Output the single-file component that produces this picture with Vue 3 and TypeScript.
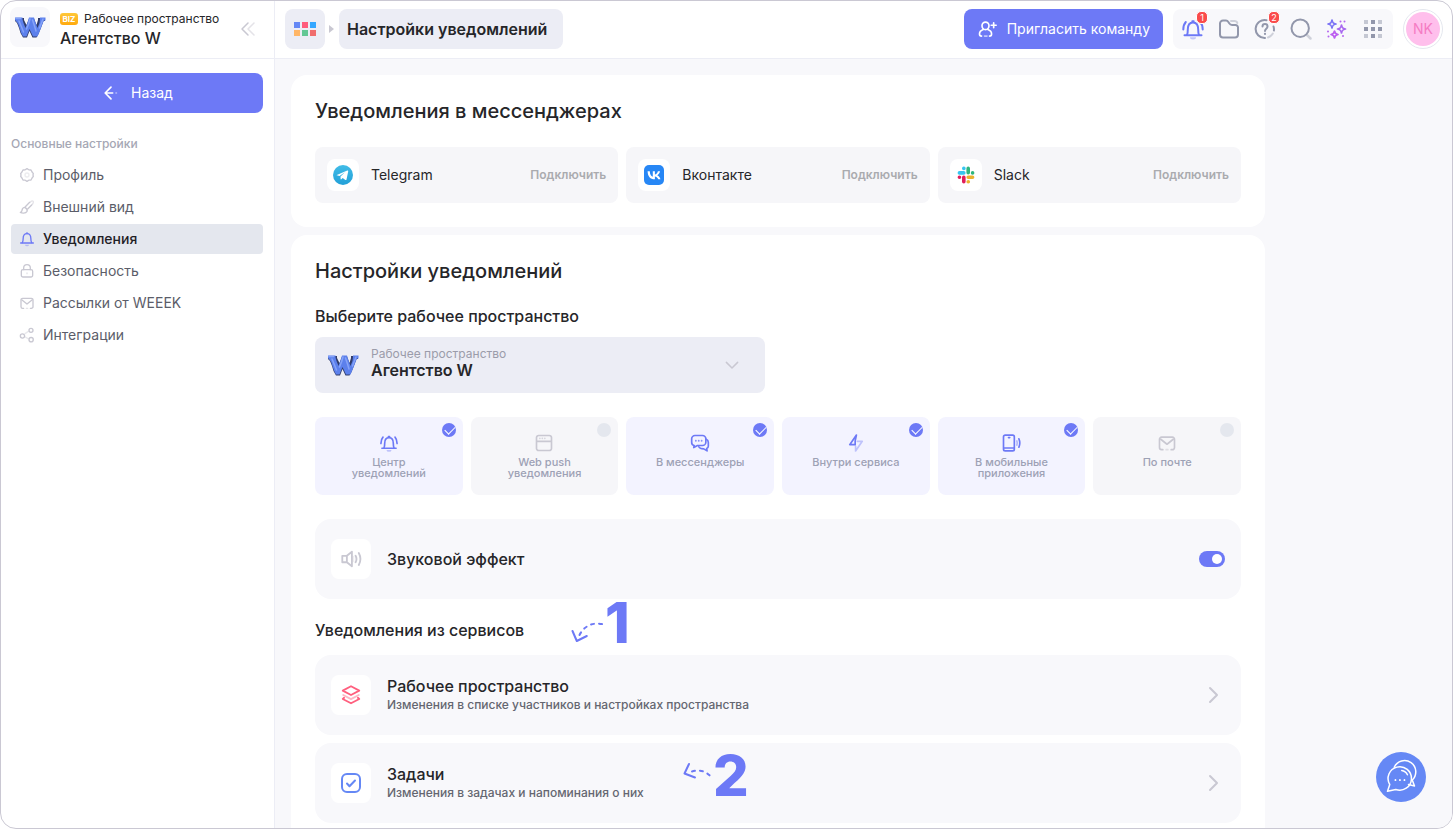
<script setup lang="ts">
import { h, ref, type FunctionalComponent } from 'vue'

interface Part {
  d: string
  color?: string
  opacity?: number
  fill?: boolean
  width?: number
}

const bellBody: Part[] = [
  { d: 'M6 18c.7-1.4.8-3 .8-5.500C6.800 8.500 8.500 5.500 12 5.500s5.200 3 5.200 7c0 2.500.1 4.100.8 5.500' },
  { d: 'M3.500 18.300h17' },
  { d: 'M11.300 4.300h1.400' },
  { d: 'M9 20.300h6a3 2.200 0 0 1-6 0z', opacity: 0.4, fill: true },
]
const bellWaves: Part = { d: 'M4.800 5C3 7 2.300 9.500 2.300 12.500M19.200 5c1.800 2 2.500 4.500 2.500 7.500' }

const icons: Record<string, Part[]> = {
  bell: [...bellBody, bellWaves],
  bellSmall: [
    { d: 'M5 17.500c1-1.700 1.200-3.500 1.200-6C6.200 7 8.200 4 12 4s5.800 3 5.800 7.500c0 2.500.2 4.300 1.200 6' },
    { d: 'M2.500 18h19M12 2.500V4' },
    { d: 'M9 20.500h6a3 2.500 0 0 1-6 0z', opacity: 0.4, fill: true },
  ],
  mail: [
    { d: 'M7 20H5.500A2.500 2.500 0 0 1 3 17.500v-10A2.500 2.500 0 0 1 5.500 5h13A2.500 2.500 0 0 1 21 7.500v10a2.500 2.500 0 0 1-2.500 2.500H17' },
    { d: 'm4.500 7.500 7.500 6 7.500-6' },
    { d: 'M11 20h2', opacity: 0.5 },
  ],
  back: [{ d: 'm12 5-7 7 7 7M5.500 12H14' }, { d: 'M18 12h.5', opacity: 0.5 }],
  collapse: [{ d: 'm12 4-8 8 8 8' }, { d: 'm20 4-8 8 8 8', opacity: 0.5 }],
  gear: [
    { d: 'M9.300 4.200 12 2.500l2.700 1.700 3.300.3 1.600 3 1.900 2.500-.5 2 .5 2-1.900 2.500-1.600 3-3.300.3L12 21.500l-2.700-1.700-3.300-.3-1.600-3L2.500 14l.5-2-.5-2 1.900-2.500 1.600-3z' },
    { d: 'M9 12a3 3 0 0 1 6 0 3 3 0 0 1-6 0', opacity: 0.35 },
  ],
  brush: [
    { d: 'M9 12.500c-3 0-4.200 2-4.500 4.500-.2 1.800-1 2.500-2.500 3 2 1.200 8 2.200 10-1.500 1-2-.2-4-3-6z' },
    { d: 'M9.500 11.500 16 5M13 15l6-6' },
    { d: 'm17 4.500 2-1.500c1.500-.8 3.200.8 2.400 2.400L20 8', opacity: 0.5 },
  ],
  lock: [
    { d: 'M6 10h12a2.500 2.500 0 0 1 2.500 2.500v6A2.500 2.500 0 0 1 18 21H6a2.500 2.500 0 0 1-2.500-2.500v-6A2.500 2.500 0 0 1 6 10z' },
    { d: 'M7 10V7.500a5 5 0 0 1 10 0V10' },
    { d: 'M12 15v1', opacity: 0.5 },
  ],
  share: [
    { d: 'M2 13.500a3.200 3.200 0 1 0 6.400 0 3.200 3.200 0 1 0-6.400 0M15 5a3 3 0 1 0 6 0 3 3 0 1 0-6 0M15 19a3.200 3.200 0 1 0 6.400 0 3.200 3.200 0 1 0-6.400 0' },
    { d: 'm9 10 5-3.500M9.500 15l4 2.500', opacity: 0.4 },
  ],
  invite: [
    { d: 'M6 8a4.200 4.200 0 1 1 8.400 0c0 2.500-1.800 4.700-4.200 4.700S6 10.500 6 8z' },
    { d: 'M7.500 12.500C4.500 13.500 3 15.500 3 18c0 1.500.8 2.500 2.500 2.500M13 12.500c3 1 4.500 3 4.500 5.500 0 1.500-.8 2.500-2.500 2.500' },
    { d: 'M9 20.500h3', opacity: 0.6 },
    { d: 'M20 4.500v6M17 7.500h6' },
  ],
  folder: [
    { d: 'M3 7v10.500A3 3 0 0 0 6 20.500h12a3 3 0 0 0 3-3v-7a2.500 2.500 0 0 0-2.500-2.500H15c-1.500 0-2.200-.7-3-2l-.8-1.200c-.5-.8-1.200-1.300-2.200-1.300H6a3 3 0 0 0-3 3z' },
    { d: 'M14 4h3.500c1.500 0 2.500.8 2.800 2', opacity: 0.4 },
  ],
  help: [
    { d: 'M13.500 3.200A9 9 0 1 0 12 21M20.500 9.500c.5 1.400.6 2.600.4 4' },
    { d: 'M19.800 16.500A9 9 0 0 1 15 20.500', opacity: 0.4 },
    { d: 'M9.500 9.500c0-3.200 5-3.200 5 0 0 2.200-2.500 2.200-2.500 4.500' },
    { d: 'M12 16.800v.2', width: 2.200 },
  ],
  search: [
    { d: 'M2.500 11.200a8.700 8.700 0 1 0 17.400 0 8.700 8.700 0 1 0-17.400 0' },
    { d: 'm18.500 18.500 3 3', opacity: 0.4, width: 2.500 },
  ],
  sparkles: [
    { d: 'M7 3c.5 2.800 1.200 3.500 4 4-2.800.5-3.500 1.200-4 4-.5-2.800-1.200-3.500-4-4 2.800-.5 3.500-1.200 4-4z', color: '#7c74f5', width: 1.700 },
    { d: 'M16.500 8c.5 2.800 1.200 3.500 4 4-2.800.5-3.500 1.200-4 4-.5-2.800-1.200-3.500-4-4 2.800-.5 3.500-1.200 4-4z', color: '#a868f0', width: 1.700 },
    { d: 'M9.500 14c.4 2.400 1.100 3.100 3.500 3.500-2.400.4-3.100 1.100-3.500 3.500-.4-2.400-1.100-3.100-3.500-3.500 2.400-.4 3.100-1.100 3.500-3.500z', color: '#bd60f0', width: 1.700 },
    { d: 'M15.500 4.500v.1M19.500 4.500v.1M3 14.500v.1M3.500 19.500v.1M18 19v.1', color: '#b566f0', width: 2 },
  ],
  grid: [
    { d: 'M10 3h4v4h-4zM3 10h4v4H3zM10 10h4v4h-4zM17 10h4v4h-4zM10 17h4v4h-4z', fill: true },
    { d: 'M3 3h4v4H3zM17 3h4v4h-4zM3 17h4v4H3zM17 17h4v4h-4z', fill: true, opacity: 0.5 },
  ],
  web: [
    { d: 'M5.500 3h13A2.500 2.500 0 0 1 21 5.500v13a2.500 2.500 0 0 1-2.500 2.500h-13A2.500 2.500 0 0 1 3 18.500v-13A2.500 2.500 0 0 1 5.500 3zM3 10h18' },
    { d: 'M7 6.500v.1M10 6.500v.1M13 6.500v.1', opacity: 0.7 },
  ],
  chats: [
    { d: 'M6 3h9a4 4 0 0 1 4 4v4a4 4 0 0 1-4 4H9l-4.500 2.500L5 15a4 4 0 0 1-3-4V7a4 4 0 0 1 4-4z' },
    { d: 'M19.500 7.500c1.700.7 2.500 2 2.500 4v4c0 1.500-.7 2.500-2 3l.5 3-4-2.500c-3 0-5-.5-6-2.500' },
    { d: 'M7 9.200v.1M10.500 9.200v.1M14 9.200v.1', width: 2.200, opacity: 0.8 },
  ],
  bolt: [
    { d: 'M12.500 2.500 4.500 14H11V9.500z' },
    { d: 'M13.500 10h6L11.500 21.500V16', opacity: 0.4 },
  ],
  phone: [
    { d: 'M5 2.500h9a2 2 0 0 1 2 2v15a2 2 0 0 1-2 2H5a2 2 0 0 1-2-2v-15a2 2 0 0 1 2-2zM3 18h13M9 5.500h1.500' },
    { d: 'M19 9.500c.7 1.700.7 3.300 0 5', opacity: 0.5 },
    { d: 'M21.500 7c1.400 3.300 1.400 6.700 0 10' },
  ],
  sound: [
    { d: 'M7.500 8.500 13 4v16l-5.500-4.500M7.500 8.500h-5v7h5z' },
    { d: 'M14.500 9.500v5', opacity: 0.3 },
    { d: 'M17 8.500c1.300 2.300 1.300 4.700 0 7M20.500 5.500c2.200 4 2.200 9 0 13' },
  ],
  layers: [
    { d: 'm12 2.500 9 4.700-9 4.800-9-4.800z' },
    { d: 'M3.500 12 12 16.500 20.500 12', opacity: 0.45 },
    { d: 'm4.500 15-1.500 1.300 9 4.700 9-4.700-1.500-1.300' },
  ],
  task: [
    { d: 'M8 3h8a5 5 0 0 1 5 5v8a5 5 0 0 1-5 5H8a5 5 0 0 1-5-5V8a5 5 0 0 1 5-5z' },
    { d: 'm8 12.500 2.500 2.700L16 9.500' },
  ],
  right: [{ d: 'm9 5 7 7-7 7' }],
  down: [{ d: 'm4.500 8.500 7.500 7.500 7.500-7.500' }],
  talk: [
    { d: 'M3 21.500 4.500 17A7.800 7.800 0 1 1 8.500 20.300z' },
    { d: 'M7.500 5.500A7.500 7.500 0 1 1 19.500 14l1.500 4-4-1' },
    { d: 'M12.500 7.700c1.700.2 3 1.200 3.800 2.800' },
    { d: 'M8.300 14v.1M11.300 14v.1M14.300 14v.1', width: 1.200 },
  ],
}

const Icon: FunctionalComponent<{ name: string; size?: number; weight?: number }> = (props) =>
  h(
    'svg',
    {
      class: 'icon',
      width: props.size ?? 24,
      height: props.size ?? 24,
      viewBox: '0 0 24 24',
      fill: 'none',
      'stroke-linecap': 'round',
      'stroke-linejoin': 'round',
      'aria-hidden': 'true',
    },
    icons[props.name].map((part) =>
      h('path', {
        d: part.d,
        opacity: part.opacity ?? 1,
        fill: part.fill ? part.color ?? 'currentColor' : 'none',
        stroke: part.fill ? 'none' : part.color ?? 'currentColor',
        'stroke-width': part.width ?? props.weight ?? 2,
      }),
    ),
  )
Icon.props = ['name', 'size', 'weight']

const Logo: FunctionalComponent = () =>
  h('svg', { class: 'icon', width: 32, height: 24, viewBox: '0 0 32 24', fill: 'none', 'aria-hidden': 'true' }, [
    h('path', { d: 'M2 3h8v2l2.500 5L15 3.500h5L22.500 10 24 5V3h7v3h-1.500L28 10l-1.500 4-2 5-2 3.500h-4L15.500 16 13 22.500H9L6.500 18 5 13 3 8 1 6V3z', fill: '#303c6b' }),
    h('path', { d: 'M1 2.500h7.500v2L9.500 8l2 5L14 6l1-3.500h5l1 3.500 2.500 7 2-5L26 4V2.500h5.500v3H30L28.500 9 27 13l-2 5-1.500 3.500h-4.500L15.500 14 12.500 21.500H9L7 17.500 5.500 13 4 8.500 1 5z', fill: '#5c80ec' }),
    h('path', { d: 'M2 3.500h4.500M5 6l2.500 6 2 5M16 4l-1.500 5-2 5M18.500 5l2 6 1.500 5M29 4l-2 5-1.500 4', stroke: '#86a3f8', 'stroke-width': 1.500, 'stroke-linecap': 'round' }),
  ])

const menu = [
  { icon: 'gear', text: 'Профиль' },
  { icon: 'brush', text: 'Внешний вид' },
  { icon: 'bellSmall', text: 'Уведомления', active: true },
  { icon: 'lock', text: 'Безопасность' },
  { icon: 'mail', text: 'Рассылки от WEEEK' },
  { icon: 'share', text: 'Интеграции' },
]
const tools = [
  { icon: 'bell', label: 'Уведомления', badge: '1' },
  { icon: 'folder', label: 'Файлы' },
  { icon: 'help', label: 'Помощь', badge: '2' },
  { icon: 'search', label: 'Поиск' },
  { icon: 'sparkles', label: 'Ассистент' },
  { icon: 'grid', label: 'Сервисы' },
]
const messengers = [
  { id: 'telegram', name: 'Telegram' },
  { id: 'vk', name: 'Вконтакте' },
  { id: 'slack', name: 'Slack' },
]
const channels = ref([
  { icon: 'bell', text: 'Центр уведомлений', on: true },
  { icon: 'web', text: 'Web push уведомления', on: false },
  { icon: 'chats', text: 'В мессенджеры', on: true },
  { icon: 'bolt', text: 'Внутри сервиса', on: true },
  { icon: 'phone', text: 'В мобильные приложения', on: true },
  { icon: 'mail', text: 'По почте', on: false },
])
const services = [
  { icon: 'layers', size: 22, title: 'Рабочее пространство', note: 'Изменения в списке участников и настройках пространства' },
  { icon: 'task', size: 24, title: 'Задачи', note: 'Изменения в задачах и напоминания о них' },
]
const workspace = ref('Агентство W')
const sound = ref(true)
</script>

<template>
  <div class="frame">
    <aside class="sidebar">
      <div class="brand">
        <span class="brand-logo"><Logo /></span>
        <div class="brand-text">
          <span class="brand-top"><b class="biz">BIZ</b>Рабочее пространство</span>
          <span class="brand-name">Агентство W</span>
        </div>
        <button class="collapse" type="button" aria-label="Свернуть меню"><Icon name="collapse" :size="18" /></button>
      </div>
      <div class="side-body">
        <button class="back" type="button"><Icon name="back" :size="20" />Назад</button>
        <p class="side-title">Основные настройки</p>
        <nav class="menu">
          <a v-for="item in menu" :key="item.text" href="#" :class="['menu-item', { active: item.active }]">
            <Icon :name="item.icon" :size="16" />{{ item.text }}
          </a>
        </nav>
      </div>
    </aside>

    <div class="content">
      <header class="topbar">
        <button class="apps" type="button" aria-label="Приложения">
          <i class="a1"></i><i class="a2"></i><i class="a3"></i><i class="a4"></i><i class="a5"></i><i class="a6"></i>
        </button>
        <span class="crumb-arrow"></span>
        <a class="crumb" href="#">Настройки уведомлений</a>
        <button class="invite" type="button"><Icon name="invite" :size="20" />Пригласить команду</button>
        <div class="tools">
          <button v-for="tool in tools" :key="tool.icon" type="button" :class="['tool', tool.icon]" :aria-label="tool.label">
            <Icon :name="tool.icon" />
            <span v-if="tool.badge" class="badge">{{ tool.badge }}</span>
          </button>
        </div>
        <button class="avatar" type="button"><span>NK</span></button>
      </header>

      <main class="scroll">
        <section class="card">
          <h2>Уведомления в мессенджерах</h2>
          <div class="messengers">
            <div v-for="m in messengers" :key="m.id" class="messenger">
              <span class="messenger-icon">
                <svg v-if="m.id === 'telegram'" width="20" height="20" viewBox="0 0 20 20" aria-hidden="true">
                  <defs><linearGradient id="tg" x1="0" y1="0" x2="0" y2="1"><stop offset="0" stop-color="#41bce7" /><stop offset="1" stop-color="#22a0d8" /></linearGradient></defs>
                  <circle cx="10" cy="10" r="10" fill="url(#tg)" />
                  <path d="M3.800 9.900 14.300 5.600c.6-.2 1 .1.900.8l-1.700 8c-.1.600-.6.800-1.100.5l-2.700-2-1.400 1.400c-.3.300-.7.200-.7-.3l-.1-2.500 4.500-4.200-5.500 3.600-2.600-.6c-.3-.1-.4-.3-.1-.4z" fill="#fff" />
                </svg>
                <svg v-else-if="m.id === 'vk'" width="20" height="20" viewBox="0 0 20 20" aria-hidden="true">
                  <rect width="20" height="20" rx="5" fill="#2787f5" />
                  <path d="M10.700 14.300C6.300 14.300 3.700 11.300 3.600 6.200h2.200c.1 3.700 1.700 5.300 3 5.600V6.200h2.100v3.200c1.300-.1 2.600-1.600 3-3.200h2.100c-.3 2-1.800 3.500-2.800 4.100 1 .5 2.700 1.800 3.300 4h-2.300c-.5-1.600-1.700-2.800-3.300-2.900v2.900z" fill="#fff" />
                </svg>
                <svg v-else width="18" height="18" viewBox="0 0 18 18" fill="none" stroke-width="3.600" stroke-linecap="round" aria-hidden="true">
                  <path d="M2.400 6.900h4.400M6.800 2.400h.1" stroke="#36c5f0" />
                  <path d="M11.200 2.400v4.400M15.600 6.900v.1" stroke="#2eb67d" />
                  <path d="M11.200 11.300h4.400M11.200 15.700h.1" stroke="#ecb22e" />
                  <path d="M6.800 11.300v4.400M2.400 11.300h.1" stroke="#e01e5a" />
                </svg>
              </span>
              <span class="messenger-name">{{ m.name }}</span>
              <button class="connect" type="button">Подключить</button>
            </div>
          </div>
        </section>

        <section class="card">
          <h2>Настройки уведомлений</h2>
          <h3 class="choose">Выберите рабочее пространство</h3>
          <div class="picker">
            <Logo />
            <div class="picker-text">
              <label for="workspace">Рабочее пространство</label>
              <select id="workspace" v-model="workspace"><option>Агентство W</option></select>
            </div>
            <Icon name="down" :size="18" />
          </div>

          <div class="channels">
            <label v-for="c in channels" :key="c.icon" :class="['channel', { on: c.on }]">
              <input v-model="c.on" type="checkbox" class="tick" />
              <Icon :name="c.icon" :size="20" />
              <span class="channel-text">{{ c.text }}</span>
            </label>
          </div>

          <label class="row">
            <span class="row-icon"><Icon name="sound" :size="22" /></span>
            <span class="row-title">Звуковой эффект</span>
            <input v-model="sound" type="checkbox" role="switch" class="switch" />
          </label>

          <div class="services-head">
            <h3>Уведомления из сервисов</h3>
            <div class="mark first">
              <svg width="34" height="24" viewBox="0 0 34 24" fill="none" stroke="#6d79f6" stroke-width="2" stroke-linecap="round" stroke-linejoin="round" aria-hidden="true">
                <path d="M1.500 11l4.300 10 10-5" /><path d="M8.500 15C13 6 22 1 35 5" stroke-dasharray="3 5" />
              </svg>
              <strong>1</strong>
            </div>
          </div>
          <div class="services">
            <a v-for="s in services" :key="s.icon" href="#" class="row">
              <span :class="['row-icon', s.icon]"><Icon :name="s.icon" :size="s.size" /></span>
              <span class="row-text">
                <span class="row-title">{{ s.title }}</span>
                <span class="row-note">{{ s.note }}</span>
              </span>
              <Icon name="right" />
            </a>
            <div class="mark second">
              <svg width="30" height="20" viewBox="0 0 30 20" fill="none" stroke="#6d79f6" stroke-width="2" stroke-linecap="round" stroke-linejoin="round" aria-hidden="true">
                <path d="M6 2 1.500 11.500 12 15.500" /><path d="M9 9.500c7-2 14-1 20 6.500" stroke-dasharray="3 5" />
              </svg>
              <strong>2</strong>
            </div>
          </div>
        </section>
      </main>
    </div>

    <button class="chat" type="button" aria-label="Чат поддержки"><Icon name="talk" :size="36" :weight="1" /></button>
  </div>
</template>

<style>
body {
  background: #fff;
}
</style>

<style scoped>
.frame,
.frame * {
  box-sizing: border-box;
}
.frame {
  display: flex;
  height: 100vh;
  overflow: hidden;
  border: 1px solid #cac8d3;
  border-radius: 16px;
  background: #fff;
  color: #262629;
  font-family: Inter, "Liberation Sans", sans-serif;
  font-size: 14px;
  line-height: 16px;
}
button,
select {
  border: 0;
  padding: 0;
  background: none;
  color: inherit;
  font: inherit;
  cursor: pointer;
}
a {
  color: inherit;
  text-decoration: none;
}
h2,
h3,
p {
  margin: 0;
}
.icon {
  flex: none;
  display: block;
}

.sidebar {
  flex: none;
  width: 274px;
  border-right: 1px solid #ecedf5;
}
.brand {
  display: flex;
  align-items: center;
  height: 58px;
  padding: 0 17px 2px 9px;
  border-bottom: 1px solid #ecedf5;
}
.brand-logo {
  display: flex;
  align-items: center;
  justify-content: center;
  width: 40px;
  height: 40px;
  margin-bottom: 4px;
  border-radius: 8px;
  background: #f8f8fb;
}
.brand-text {
  display: flex;
  flex: 1;
  flex-direction: column;
  margin-left: 10px;
}
.brand-top {
  display: flex;
  align-items: center;
  gap: 6px;
  font-size: 12px;
  line-height: 18px;
}
.biz {
  width: 18px;
  height: 12px;
  border-radius: 3px;
  background: linear-gradient(#ffc83a, #ffa90d);
  color: #fff;
  font-size: 8px;
  line-height: 12px;
  text-align: center;
}
.brand-name {
  font-size: 16px;
  font-weight: 500;
  line-height: 20px;
}
.collapse {
  color: #c9c8d2;
}
.side-body {
  padding: 14px 11px 0 10px;
}
.back {
  display: flex;
  align-items: center;
  justify-content: center;
  gap: 10px;
  width: 100%;
  height: 40px;
  border-radius: 8px;
  background: #6d79f6;
  color: #fff;
}
.side-title {
  margin: 22px 0 7px;
  color: #a5a7b4;
  font-size: 12px;
  font-weight: 500;
  line-height: 18px;
}
.menu {
  display: flex;
  flex-direction: column;
  gap: 2px;
}
.menu-item {
  display: flex;
  align-items: center;
  gap: 8px;
  height: 30px;
  padding: 0 8px;
  border-radius: 4px;
  color: #5b5d69;
}
.menu-item .icon {
  color: #c9c8d2;
}
.menu-item.active {
  background: #e4e7ee;
  color: #1f2025;
  font-weight: 500;
}
.menu-item.active .icon {
  color: #6d79f6;
}

.content {
  display: flex;
  flex: 1;
  flex-direction: column;
  min-width: 0;
}
.topbar {
  display: flex;
  flex: none;
  align-items: center;
  height: 58px;
  padding: 0 9px 2px 10px;
  border-bottom: 1px solid #ecedf5;
}
.apps {
  display: grid;
  grid-template-columns: repeat(3, 6px);
  place-content: center;
  gap: 2px;
  width: 40px;
  height: 40px;
  border-radius: 8px;
  background: #ecedf5;
}
.apps i {
  height: 6px;
}
.a1 { background: #6588f5; }
.a2 { background: #ff5c7c; }
.a3 { background: #34a7ff; }
.a4 { background: #ffb667; }
.a5 { background: #62c794; }
.a6 { background: #f06d6d; }
.crumb-arrow {
  margin: 0 5px 0 4px;
  border: solid transparent;
  border-width: 4px 0 4px 5px;
  border-left-color: #c9c8d2;
}
.crumb {
  height: 40px;
  padding: 0 16px 0 8px;
  border-radius: 8px;
  background: #ecedf5;
  font-size: 16px;
  font-weight: 600;
  line-height: 40px;
}
.invite {
  display: flex;
  align-items: center;
  gap: 10px;
  height: 40px;
  margin-left: auto;
  padding: 0 13px;
  border-radius: 8px;
  background: #6d79f6;
  color: #fff;
}
.tools {
  display: flex;
  height: 40px;
  margin: 0 10px;
  padding: 0 2px;
  border-radius: 8px;
  background: #f8f8fb;
}
.tool {
  display: flex;
  position: relative;
  align-items: center;
  justify-content: center;
  width: 36px;
  color: #9297ab;
}
.tool.bell {
  color: #6d79f6;
}
.badge {
  position: absolute;
  top: 2px;
  right: 3px;
  min-width: 10px;
  height: 11px;
  border: 1px solid #fff;
  box-sizing: content-box;
  border-radius: 5px;
  background: #fa4b4b;
  color: #fff;
  font-size: 9px;
  line-height: 11px;
  text-align: center;
}
.avatar {
  width: 40px;
  height: 40px;
  padding: 2px;
  border: 1px solid #e4e7ee;
  border-radius: 50%;
}
.avatar span {
  display: block;
  border-radius: 50%;
  background: #ffbfec;
  color: #f57cc3;
  line-height: 34px;
}

.scroll {
  flex: 1;
  min-height: 0;
  overflow-y: auto;
  scrollbar-width: none;
  padding: 16px;
  background: #f8f8fb;
}
.card {
  max-width: 974px;
  margin-bottom: 8px;
  padding: 24px;
  border-radius: 16px;
  background: #fff;
}
h2 {
  margin-bottom: 24px;
  font-size: 20px;
  font-weight: 500;
  line-height: 24px;
}
h3 {
  font-size: 16px;
  font-weight: 500;
  line-height: 18px;
}
.messengers {
  display: grid;
  grid-template-columns: repeat(3, 1fr);
  gap: 8px;
}
.messenger {
  display: flex;
  align-items: center;
  height: 56px;
  padding: 0 12px;
  border-radius: 8px;
  background: #f6f6f9;
}
.messenger-icon {
  display: flex;
  align-items: center;
  justify-content: center;
  width: 32px;
  height: 32px;
  border-radius: 8px;
  background: #fff;
}
.messenger-name {
  flex: 1;
  margin-left: 12px;
}
.connect {
  color: #aaabaf;
  font-size: 12px;
  font-weight: 600;
}

.choose {
  margin-bottom: 12px;
}
.picker {
  display: flex;
  align-items: center;
  gap: 12px;
  max-width: 450px;
  height: 56px;
  padding: 0 24px 0 12px;
  border-radius: 8px;
  background: #ecedf5;
  color: #c9c8d2;
}
.picker-text {
  display: flex;
  flex: 1;
  flex-direction: column;
  padding-bottom: 4px;
}
.picker-text label {
  color: #9b9caa;
  font-size: 12px;
  line-height: 14px;
}
.picker-text select {
  appearance: none;
  height: 18px;
  outline: 0;
  color: #262629;
  font-size: 16px;
  font-weight: 600;
  line-height: 18px;
}
.channels {
  display: grid;
  grid-template-columns: repeat(6, 1fr);
  gap: 8px;
  margin: 24px 0;
}
.channel {
  display: flex;
  position: relative;
  flex-direction: column;
  align-items: center;
  gap: 4px;
  height: 78px;
  padding: 16px 24px 0;
  border-radius: 8px;
  background: #f6f6f9;
  color: #c9c8d2;
  cursor: pointer;
}
.channel.on {
  background: #f3f3ff;
  color: #6d79f6;
}
.channel-text {
  color: #9da1b5;
  font-size: 11px;
  font-weight: 500;
  line-height: 11px;
  text-align: center;
}
.tick {
  position: absolute;
  top: 6px;
  right: 7px;
  appearance: none;
  width: 14px;
  height: 14px;
  margin: 0;
  border-radius: 50%;
  background: #e4e7ee;
}
.tick:checked {
  background: #6d79f6;
}
.tick:checked::after {
  content: "";
  position: absolute;
  top: 3px;
  left: 3px;
  width: 9px;
  height: 5px;
  border: solid #fff;
  border-width: 0 0 1px 1px;
  transform: rotate(-45deg);
}
.row {
  display: flex;
  align-items: center;
  gap: 16px;
  height: 80px;
  padding: 0 16px;
  border-radius: 16px;
  background: #f8f8fb;
  color: #c9c8d2;
}
.row-icon {
  display: flex;
  align-items: center;
  justify-content: center;
  width: 40px;
  height: 40px;
  border-radius: 8px;
  background: #fff;
}
.row-icon.layers {
  color: #ff5f7e;
}
.row-icon.task {
  color: #6588f5;
}
.row-text {
  display: flex;
  flex: 1;
  flex-direction: column;
  gap: 2px;
}
.row-title {
  flex: 1;
  color: #262629;
  font-size: 16px;
  font-weight: 500;
  line-height: 18px;
}
.row-note {
  color: #646670;
  font-size: 12px;
  font-weight: 500;
  line-height: 16px;
}
.switch {
  appearance: none;
  width: 26px;
  height: 16px;
  margin: 0;
  padding: 3px;
  border-radius: 8px;
  background: #c9c8d2;
}
.switch::after {
  content: "";
  display: block;
  width: 10px;
  height: 10px;
  border-radius: 50%;
  background: #fff;
}
.switch:checked {
  background: #6d79f6;
}
.switch:checked::after {
  margin-left: 10px;
}
.services-head {
  position: relative;
  padding: 22px 0 16px;
}
.services {
  display: flex;
  position: relative;
  flex-direction: column;
  gap: 8px;
}
.mark {
  display: flex;
  position: absolute;
  align-items: center;
  pointer-events: none;
}
.mark svg {
  overflow: visible;
}
.mark strong {
  color: #6d79f6;
  font-size: 56px;
  font-weight: 800;
  line-height: 56px;
}
.mark.first {
  top: -4px;
  left: 256px;
}
.mark.first svg {
  margin-top: 18px;
}
.mark.second {
  top: 93px;
  left: 368px;
}
.mark.second svg {
  margin-bottom: 8px;
}
.chat {
  display: flex;
  position: absolute;
  right: 27px;
  bottom: 27px;
  align-items: center;
  justify-content: center;
  width: 50px;
  height: 50px;
  border-radius: 50%;
  background: #6588f5;
  color: #fff;
}
</style>
